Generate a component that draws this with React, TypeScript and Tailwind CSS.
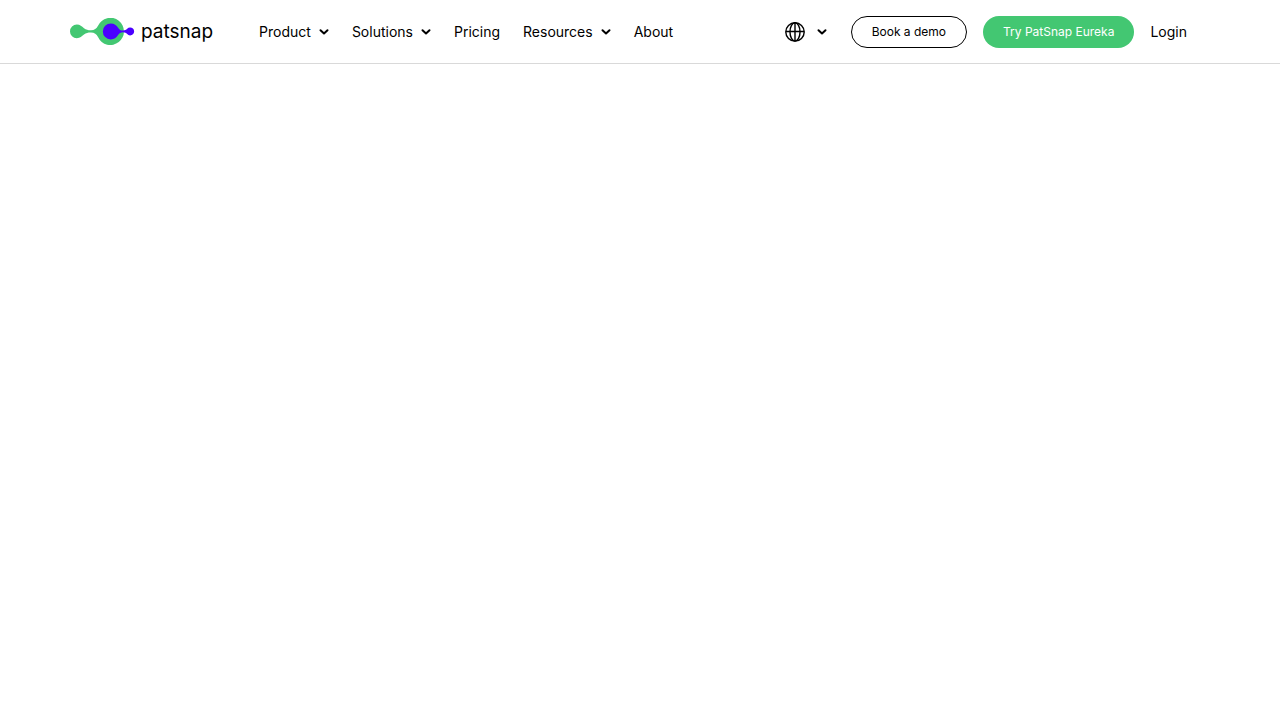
import React from 'react';

interface NavItem {
  label: string;
  hasMenu: boolean;
}

const navItems: NavItem[] = [
  { label: 'Product', hasMenu: true },
  { label: 'Solutions', hasMenu: true },
  { label: 'Pricing', hasMenu: false },
  { label: 'Resources', hasMenu: true },
  { label: 'About', hasMenu: false },
];

const Chevron: React.FC = () => (
  <svg className="h-[10px] w-[10px]" viewBox="0 0 10 10" fill="none" aria-hidden="true">
    <path d="M1.5 3.2 5 6.5 8.5 3.2" stroke="#000" strokeWidth="2" strokeLinecap="round" strokeLinejoin="round" />
  </svg>
);

const GlobeIcon: React.FC = () => (
  <svg className="h-5 w-5" viewBox="0 0 20 20" fill="none" stroke="#000" strokeWidth="1.4" aria-hidden="true">
    <circle cx="10" cy="9.9" r="9.2" />
    <ellipse cx="10" cy="9.9" rx="5" ry="9.2" />
    <path d="M10 .7v18.4M.8 9.5h18.4" />
  </svg>
);

const Logo: React.FC = () => (
  <a href="#" className="flex items-center gap-[6px]">
    <svg className="h-7 w-[65px]" viewBox="0 0.6 65 28" aria-hidden="true">
      <path
        fill="#43c772"
        d="M6.8 7.2C10.3 7.2 11.6 9 14 10.8C16.2 12.5 18.8 12.9 21 12.8C24.6 12.7 26.4 11.4 28 8.3A13.6 13.6 0 1 1 28 19.7C26.4 16.6 24.6 15.3 21 15.2C18.8 15.1 16.2 15.5 14 17.2C11.6 19 10.3 20.8 6.8 20.8A6.8 6.8 0 0 1 6.8 7.2Z"
      />
      <path
        fill="#4a00ff"
        d="M40.8 6A8 8 0 1 0 40.8 22C44.3 22 46.4 20.3 48.1 17.7C49.5 15.6 51 14.8 53 14.9C55 15 56.1 15.7 57.2 16.7A4 4 0 1 0 57.2 11.3C56.1 12.3 55 13 53 13.1C51 13.2 49.5 12.4 48.1 10.3C46.4 7.7 44.3 6 40.8 6Z"
      />
    </svg>
    <span className="text-[19px] leading-6">patsnap</span>
  </a>
);

const Header: React.FC = () => (
  <header className="border-b border-[#d9d9d9] bg-white">
    <div className="flex h-[63px] items-center justify-between pr-[93px] pl-[70px]">
      <div className="flex items-center gap-[46px]">
        <Logo />
        <nav className="flex items-center gap-[23px] text-[14px] leading-5">
          {navItems.map((item) =>
            item.hasMenu ? (
              <button key={item.label} type="button" className="flex items-center gap-2">
                {item.label}
                <Chevron />
              </button>
            ) : (
              <a key={item.label} href="#">
                {item.label}
              </a>
            )
          )}
        </nav>
      </div>

      {/* Actions */}
      <div className="flex items-center gap-4">
        <button type="button" className="mr-2 flex items-center gap-3" aria-label="Change language">
          <GlobeIcon />
          <Chevron />
        </button>
        <button type="button" className="h-8 rounded-full border border-black px-5 text-[12px]">
          Book a demo
        </button>
        <button type="button" className="h-8 rounded-full bg-[#43c772] px-5 text-[12px] text-white">
          Try PatSnap Eureka
        </button>
        <a href="#" className="text-[14px] leading-5">
          Login
        </a>
      </div>
    </div>
  </header>
);

const App: React.FC = () => (
  <div className="min-h-screen bg-white font-['Inter',sans-serif] text-black">
    <Header />
  </div>
);

export default App;
